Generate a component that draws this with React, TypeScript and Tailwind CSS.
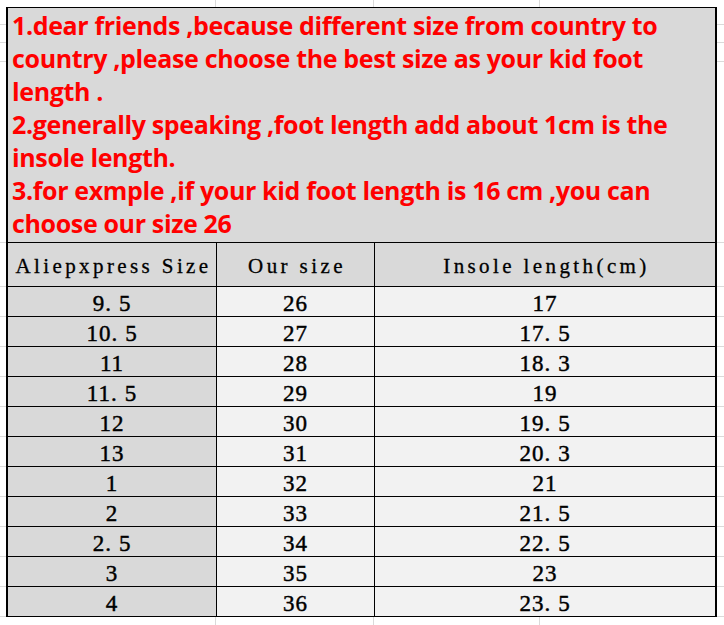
import React from "react";

type Row = { ali: string; ours: string; insole: string };

const rows: Row[] = [
  { ali: "9.5", ours: "26", insole: "17" },
  { ali: "10.5", ours: "27", insole: "17.5" },
  { ali: "11", ours: "28", insole: "18.3" },
  { ali: "11.5", ours: "29", insole: "19" },
  { ali: "12", ours: "30", insole: "19.5" },
  { ali: "13", ours: "31", insole: "20.3" },
  { ali: "1", ours: "32", insole: "21" },
  { ali: "2", ours: "33", insole: "21.5" },
  { ali: "2.5", ours: "34", insole: "22.5" },
  { ali: "3", ours: "35", insole: "23" },
  { ali: "4", ours: "36", insole: "23.5" },
];

// the sheet's dot is drawn wide, so leave a gap after it
const Num = ({ value }: { value: string }) => {
  const [a, b] = value.split(".");
  if (b === undefined) return <>{a}</>;
  return (
    <>
      {a}.<span className="ml-[7px]">{b}</span>
    </>
  );
};

const SideGrid = ({ width }: { width: string }) => (
  <div className={`${width} flex flex-col shrink-0`}>
    <div className="h-[25px] border-b border-[#dadada]" />
    <div className="h-[18px] border-b border-[#dadada]" />
    <div className="h-[19px] border-b border-[#dadada]" />
    <div className="h-[181px] border-b border-[#dadada]" />
    <div className="h-[44px] border-b border-[#dadada]" />
    {rows.map((r) => (
      <div key={r.ali} className="h-[30px] border-b border-[#dadada]" />
    ))}
    <div className="flex-1" />
  </div>
);

const StripGrid = ({ height }: { height: string }) => (
  <div className={`${height} flex shrink-0`}>
    <div className="w-[210px] border-r border-[#dadada]" />
    <div className="w-[158px] border-r border-[#dadada]" />
    <div className="w-[166px] border-r border-[#dadada]" />
    <div className="flex-1" />
  </div>
);

const App = () => {
  return (
    <div className="w-[724px] h-[625px] bg-white flex overflow-hidden">
      <SideGrid width="w-[6px]" />
      <div className="w-[711px] flex flex-col">
        <StripGrid height="h-[7px]" />
        <div className="border-x-2 border-y border-black bg-[#d9d9d9] shrink-0">
          <div className="h-[234px] pl-[4px] pt-[1px] text-[#ff0000] font-bold text-[25px] leading-[33px] font-['Open_Sans',sans-serif] tracking-[-0.35px]">
            1.dear friends ,because different size from country to
            <br />
            country ,please choose the best size as your kid foot
            <br />
            length .
            <br />
            2.generally speaking ,foot length add about 1cm is the
            <br />
            insole length.
            <br />
            3.for exmple ,if your kid foot length is 16 cm ,you can
            <br />
            choose our size 26
          </div>
          <div className="grid grid-cols-[208px_158px_1fr] h-[44px] border-t border-black font-['Liberation_Serif',serif] text-[21px] tracking-[3.4px] leading-none text-black [-webkit-text-stroke:0.3px_#000]">
            <div className="flex items-center justify-center pt-[4px] pl-[3px]">Aliepxpress Size</div>
            <div className="flex items-center justify-center pt-[4px] pl-[3px] border-l border-black">Our size</div>
            <div className="flex items-center justify-center pt-[4px] pl-[3px] border-l border-black">Insole length(cm)</div>
          </div>
          {rows.map((r) => (
            <div
              key={r.ali}
              className="grid grid-cols-[208px_158px_1fr] h-[30px] border-t border-black font-['Liberation_Serif',serif] text-[23px] leading-none tracking-[1px] text-black [-webkit-text-stroke:0.45px_#000]"
            >
              <div className="flex items-center justify-center pt-[3px]">
                <Num value={r.ali} />
              </div>
              <div className="flex items-center justify-center pt-[3px] border-l border-black bg-[#f2f2f2]">
                {r.ours}
              </div>
              <div className="flex items-center justify-center pt-[3px] border-l border-black bg-[#f2f2f2]">
                <Num value={r.insole} />
              </div>
            </div>
          ))}
        </div>
        <div className="flex-1 flex">
          <div className="w-[210px] border-r border-[#dadada]" />
          <div className="w-[158px] border-r border-[#dadada]" />
          <div className="w-[166px] border-r border-[#dadada]" />
          <div className="flex-1" />
        </div>
      </div>
      <SideGrid width="w-[7px]" />
    </div>
  );
};

export default App;
